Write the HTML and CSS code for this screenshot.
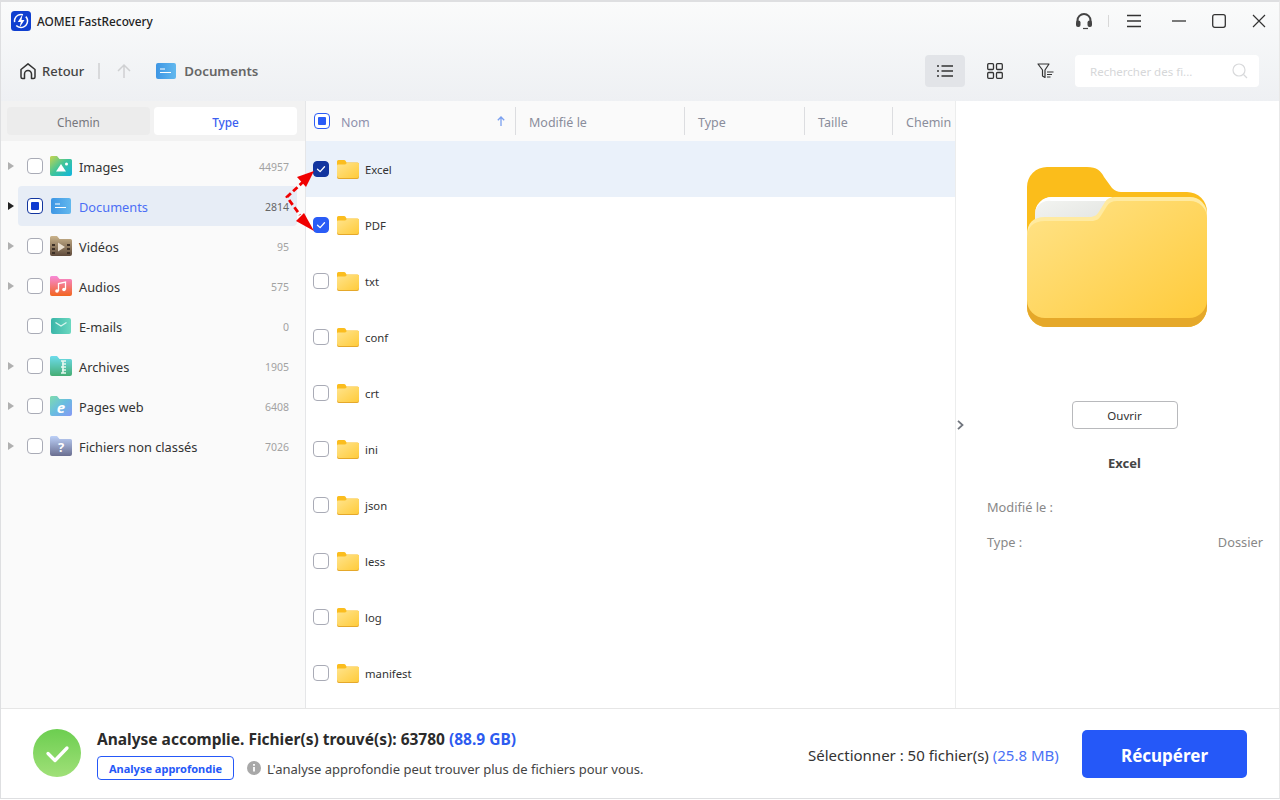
FILE: index.html
```html
<!DOCTYPE html>
<html lang="fr">
<head>
<meta charset="utf-8">
<title>AOMEI FastRecovery</title>
<link rel="stylesheet" href="styles.css">
</head>
<body>
<svg class="defs" width="0" height="0" aria-hidden="true">
  <defs>
    <linearGradient id="gf" x1="0" y1="0" x2="1" y2="1"><stop offset="0" stop-color="#ffe48d"/><stop offset="1" stop-color="#ffcb3a"/></linearGradient>
    <linearGradient id="gdoc" x1="0" y1="0" x2="1" y2="0"><stop offset="0" stop-color="#3e96e4"/><stop offset="1" stop-color="#62b8ee"/></linearGradient>
    <linearGradient id="gimg" x1="0" y1="0" x2="1" y2="1"><stop offset="0" stop-color="#c7d54f"/><stop offset=".5" stop-color="#3ec49a"/><stop offset="1" stop-color="#10b5e0"/></linearGradient>
    <linearGradient id="gvid" x1="0" y1="0" x2="0" y2="1"><stop offset="0" stop-color="#cbb48c"/><stop offset="1" stop-color="#5f4b3c"/></linearGradient>
    <linearGradient id="gaud" x1="0" y1="0" x2="0" y2="1"><stop offset="0" stop-color="#f78ad8"/><stop offset="1" stop-color="#f2651f"/></linearGradient>
    <linearGradient id="gmail" x1="0" y1="0" x2="1" y2="0"><stop offset="0" stop-color="#3ab5a8"/><stop offset="1" stop-color="#6bd8c0"/></linearGradient>
    <linearGradient id="garc" x1="0" y1="0" x2="0" y2="1"><stop offset="0" stop-color="#6ddcec"/><stop offset="1" stop-color="#45ad74"/></linearGradient>
    <linearGradient id="gweb" x1="0" y1="0" x2="1" y2="1"><stop offset="0" stop-color="#7fdcae"/><stop offset=".5" stop-color="#68bde0"/><stop offset="1" stop-color="#8698f5"/></linearGradient>
    <linearGradient id="gunk" x1="0" y1="0" x2="0" y2="1"><stop offset="0" stop-color="#bcd0f8"/><stop offset="1" stop-color="#6a6e90"/></linearGradient>
    <linearGradient id="gok" x1="0" y1="0" x2="0" y2="1"><stop offset="0" stop-color="#6cce50"/><stop offset="1" stop-color="#a0e078"/></linearGradient>
    <symbol id="folder" viewBox="0 0 22 20">
      <path d="M0 2.5A1.5 1.5 0 0 1 1.500 1H7q1 0 1.500.8L9.500 3.500H20.500A1.500 1.500 0 0 1 22 5v12a2 2 0 0 1-2 2H2a2 2 0 0 1-2-2z" fill="#fbbd1e"/>
      <path d="M0 6.500Q0 5.500 1 5.500H8q.8 0 1.200-.7L9.800 4H21q1 0 1 1v12a2 2 0 0 1-2 2H2a2 2 0 0 1-2-2z" fill="url(#gf)"/>
      <path d="M0 17a2 2 0 0 0 2 2h18a2 2 0 0 0 2-2v1.200a1.800 1.800 0 0 1-1.800 1.800H1.800A1.800 1.800 0 0 1 0 18.200z" fill="#e5a82a"/>
    </symbol>
    <symbol id="check" viewBox="0 0 16 16"><path d="M4 8.200 7 11l5-5.500" fill="none" stroke="#fff" stroke-width="1.500" stroke-linecap="round" stroke-linejoin="round"/></symbol>
  </defs>
</svg>

<div class="window">
  <header class="head">
    <div class="titlebar">
      <div class="brand">
        <svg class="logo" width="20" height="20" viewBox="0 0 20 20"><rect width="20" height="20" rx="3.500" fill="#0f3fd0"/><circle cx="10" cy="10" r="6.500" fill="none" stroke="#fff" stroke-width="1.500" stroke-dasharray="13 3.500" transform="rotate(20 10 10)"/><path d="M11.500 3.500 6.800 11h3l-1.300 5.500L13.500 9h-3z" fill="#fff"/></svg>
        <span class="brand-name">AOMEI FastRecovery</span>
      </div>
      <div class="winctl">
        <svg class="i-head" width="18" height="18" viewBox="0 0 18 18"><path d="M2.500 10.500V8.500a6.500 6.500 0 0 1 13 0v2" fill="none" stroke="#444" stroke-width="2"/><rect x="1" y="8.500" width="4.500" height="6.500" rx="2" fill="#444"/><rect x="12.500" y="8.500" width="4.500" height="6.500" rx="2" fill="#444"/><path d="M13 16.500H8" stroke="#444" stroke-width="1.200"/></svg>
        <span class="ctl-sep"></span>
        <svg class="i-menu" width="16" height="14" viewBox="0 0 16 14"><path d="M1 1.500h14M1 7h14M1 12.500h14" stroke="#333" stroke-width="1.300"/></svg>
        <svg class="i-min" width="14" height="14" viewBox="0 0 14 14"><path d="M0 7h14" stroke="#333" stroke-width="1.300"/></svg>
        <svg class="i-max" width="14" height="14" viewBox="0 0 14 14"><rect x=".7" y=".7" width="12.600" height="12.600" rx="2" fill="none" stroke="#333" stroke-width="1.300"/></svg>
        <svg class="i-close" width="14" height="14" viewBox="0 0 14 14"><path d="M1 1l12 12M13 1 1 13" stroke="#333" stroke-width="1.200"/></svg>
      </div>
    </div>
    <div class="toolbar">
      <div class="crumbs">
        <svg width="18" height="18" viewBox="0 0 18 18"><path d="M5.500 16.500H3.500A1.500 1.500 0 0 1 2 15V7.500L9 1.800l7 5.700V15a1.500 1.500 0 0 1-1.500 1.500h-2V12a3.500 3.500 0 0 0-7 0z" fill="none" stroke="#333" stroke-width="1.500" stroke-linejoin="round"/></svg>
        <span class="back">Retour</span>
        <span class="crumb-sep"></span>
        <svg class="up" width="16" height="16" viewBox="0 0 16 16"><path d="M8 15V2M2 8l6-6 6 6" fill="none" stroke="#cfd0d2" stroke-width="1.500"/></svg>
        <svg class="doc" width="20" height="16" viewBox="0 0 20 16"><rect width="20" height="16" rx="2" fill="url(#gdoc)"/><path d="M4 6h5M4 9.500h11" stroke="#fff" stroke-width="1.200"/></svg>
        <span class="crumb-name">Documents</span>
      </div>
      <div class="tools">
        <div class="tool tool-on"><svg width="16" height="12" viewBox="0 0 16 12"><path d="M4.500 1H16M4.500 6H16M4.500 11H16" stroke="#333" stroke-width="1.300"/><path d="M0 1h2M0 6h2M0 11h2" stroke="#333" stroke-width="1.500"/></svg></div>
        <div class="tool"><svg width="16" height="16" viewBox="0 0 16 16"><g fill="none" stroke="#333" stroke-width="1.300"><rect x=".7" y=".7" width="5.800" height="5.800" rx="1"/><rect x="9.500" y=".7" width="5.800" height="5.800" rx="1"/><rect x=".7" y="9.500" width="5.800" height="5.800" rx="1"/><rect x="9.500" y="9.500" width="5.800" height="5.800" rx="1"/></g></svg></div>
        <div class="tool"><svg width="17" height="16" viewBox="0 0 17 16"><path d="M1 1h11L8 7v7.500L5.500 13V7z" fill="none" stroke="#333" stroke-width="1.200" stroke-linejoin="round"/><path d="M10 9h6.500M10 11.500h5M10 14h3.500" stroke="#333" stroke-width="1.100"/></svg></div>
      </div>
      <div class="search">
        <span class="search-ph">Rechercher des fi...</span>
        <svg width="16" height="16" viewBox="0 0 16 16"><circle cx="7" cy="7" r="6" fill="none" stroke="#d8d9db" stroke-width="1.200"/><path d="M11.500 11.500 15 15" stroke="#d8d9db" stroke-width="1.200"/></svg>
      </div>
    </div>
  </header>

  <main class="body">
    <aside class="side">
      <div class="tabs">
        <div class="tab">Chemin</div>
        <div class="tab tab-on">Type</div>
      </div>
      <ul class="cats">
        <li class="cat">
          <span class="tri"></span><span class="box"></span>
          <svg class="cat-ic" width="22" height="20" viewBox="0 0 22 20"><path d="M0 1.500A1.500 1.500 0 0 1 1.500 0H7l2.500 3H20.500A1.500 1.500 0 0 1 22 4.500V18a2 2 0 0 1-2 2H2a2 2 0 0 1-2-2z" fill="url(#gimg)"/><path d="M6 15.500 11 8l5 7.500z" fill="#fff"/><circle cx="16.500" cy="8" r="1.500" fill="#fff"/></svg>
          <span class="cat-name">Images</span><span class="cat-n">44957</span>
        </li>
        <li class="cat cat-on">
          <span class="tri tri-on"></span><span class="box box-part"></span>
          <svg class="cat-ic" width="20" height="16" viewBox="0 0 20 16"><rect width="20" height="16" rx="2" fill="url(#gdoc)"/><path d="M4 6h5M4 9.500h11" stroke="#fff" stroke-width="1.200"/></svg>
          <span class="cat-name">Documents</span><span class="cat-n">2814</span>
        </li>
        <li class="cat">
          <span class="tri"></span><span class="box"></span>
          <svg class="cat-ic" width="22" height="20" viewBox="0 0 22 20"><path d="M0 1.500A1.500 1.500 0 0 1 1.500 0H7l2.500 3H20.500A1.500 1.500 0 0 1 22 4.500V18a2 2 0 0 1-2 2H2a2 2 0 0 1-2-2z" fill="url(#gvid)"/><path d="M8 6.500v9l7-4.500z" fill="#eadfd0"/><path d="M2 8h3v2H2zM2 12h3v2H2zM2 16h3v2H2zM17 8h3v2h-3zM17 12h3v2h-3zM17 16h3v2h-3z" fill="#3d3026"/></svg>
          <span class="cat-name">Vidéos</span><span class="cat-n">95</span>
        </li>
        <li class="cat">
          <span class="tri"></span><span class="box"></span>
          <svg class="cat-ic" width="22" height="20" viewBox="0 0 22 20"><path d="M0 1.500A1.500 1.500 0 0 1 1.500 0H7l2.500 3H20.500A1.500 1.500 0 0 1 22 4.500V18a2 2 0 0 1-2 2H2a2 2 0 0 1-2-2z" fill="url(#gaud)"/><path d="M8.500 15V7.500l7-1.500V13.500" fill="none" stroke="#fff" stroke-width="1.300"/><circle cx="7" cy="15" r="1.800" fill="#fff"/><circle cx="14" cy="13.500" r="1.800" fill="#fff"/></svg>
          <span class="cat-name">Audios</span><span class="cat-n">575</span>
        </li>
        <li class="cat">
          <span class="tri tri-none"></span><span class="box"></span>
          <svg class="cat-ic" width="20" height="16" viewBox="0 0 20 16"><rect width="20" height="16" rx="2" fill="url(#gmail)"/><path d="M4.500 4.500 10 8l5.500-3.500" fill="none" stroke="#d8f5ee" stroke-width="1.300"/></svg>
          <span class="cat-name">E-mails</span><span class="cat-n">0</span>
        </li>
        <li class="cat">
          <span class="tri"></span><span class="box"></span>
          <svg class="cat-ic" width="22" height="20" viewBox="0 0 22 20"><path d="M0 1.500A1.500 1.500 0 0 1 1.500 0H7l2.500 3H20.500A1.500 1.500 0 0 1 22 4.500V18a2 2 0 0 1-2 2H2a2 2 0 0 1-2-2z" fill="url(#garc)"/><path d="M11 5h5M12 8h4M11 11h5M12 14h4M11 17h5" stroke="#e6f7ef" stroke-width="1.400"/><path d="M13 5v12" stroke="#e6f7ef" stroke-width="1.600"/></svg>
          <span class="cat-name">Archives</span><span class="cat-n">1905</span>
        </li>
        <li class="cat">
          <span class="tri"></span><span class="box"></span>
          <svg class="cat-ic" width="22" height="20" viewBox="0 0 22 20"><path d="M0 1.500A1.500 1.500 0 0 1 1.500 0H7l2.500 3H20.500A1.500 1.500 0 0 1 22 4.500V18a2 2 0 0 1-2 2H2a2 2 0 0 1-2-2z" fill="url(#gweb)"/><text class="e" x="11" y="17" text-anchor="middle">e</text></svg>
          <span class="cat-name">Pages web</span><span class="cat-n">6408</span>
        </li>
        <li class="cat">
          <span class="tri"></span><span class="box"></span>
          <svg class="cat-ic" width="22" height="20" viewBox="0 0 22 20"><path d="M0 1.500A1.500 1.500 0 0 1 1.500 0H7l2.500 3H20.500A1.500 1.500 0 0 1 22 4.500V18a2 2 0 0 1-2 2H2a2 2 0 0 1-2-2z" fill="url(#gunk)"/><text class="q" x="11" y="16" text-anchor="middle">?</text></svg>
          <span class="cat-name">Fichiers non classés</span><span class="cat-n">7026</span>
        </li>
      </ul>
    </aside>

    <section class="list">
      <div class="thead">
        <div class="th th-nom"><span class="box box-part box-blue"></span><span class="th-label">Nom</span>
          <svg class="sort" width="8" height="10" viewBox="0 0 8 10"><path d="M4 10V1M.8 4.300 4 1l3.200 3.300" fill="none" stroke="#7aa0f0" stroke-width="1.300"/></svg></div>
        <div class="th th-mod">Modifié le</div>
        <div class="th th-type">Type</div>
        <div class="th th-size">Taille</div>
        <div class="th th-path">Chemin</div>
      </div>
      <div class="rows">
        <div class="row row-on"><span class="box box-check box-dark"><svg width="16" height="16"><use href="#check"/></svg></span><svg width="22" height="20"><use href="#folder"/></svg><span class="row-name">Excel</span></div>
        <div class="row"><span class="box box-check"><svg width="16" height="16"><use href="#check"/></svg></span><svg width="22" height="20"><use href="#folder"/></svg><span class="row-name">PDF</span></div>
        <div class="row"><span class="box"></span><svg width="22" height="20"><use href="#folder"/></svg><span class="row-name">txt</span></div>
        <div class="row"><span class="box"></span><svg width="22" height="20"><use href="#folder"/></svg><span class="row-name">conf</span></div>
        <div class="row"><span class="box"></span><svg width="22" height="20"><use href="#folder"/></svg><span class="row-name">crt</span></div>
        <div class="row"><span class="box"></span><svg width="22" height="20"><use href="#folder"/></svg><span class="row-name">ini</span></div>
        <div class="row"><span class="box"></span><svg width="22" height="20"><use href="#folder"/></svg><span class="row-name">json</span></div>
        <div class="row"><span class="box"></span><svg width="22" height="20"><use href="#folder"/></svg><span class="row-name">less</span></div>
        <div class="row"><span class="box"></span><svg width="22" height="20"><use href="#folder"/></svg><span class="row-name">log</span></div>
        <div class="row"><span class="box"></span><svg width="22" height="20"><use href="#folder"/></svg><span class="row-name">manifest</span></div>
      </div>
    </section>

    <aside class="detail">
      <svg class="big-folder" width="180" height="160" viewBox="0 0 180 160">
        <defs><linearGradient id="gbig" x1="0" y1="0" x2="1" y2="1"><stop offset="0" stop-color="#ffe389"/><stop offset="1" stop-color="#ffca38"/></linearGradient><linearGradient id="gpaper" x1="0" y1="0" x2="1" y2="1"><stop offset="0" stop-color="#f4f5f2"/><stop offset="1" stop-color="#e0e2df"/></linearGradient></defs>
        <path d="M0 20A20 20 0 0 1 20 0H60C70 0 74 4 77 10L85 21Q89 25 94 25H160A20 20 0 0 1 180 45V90H0z" fill="#fbbd1b"/>
        <path d="M8 60V47A17 17 0 0 1 25 30H85L72 52 30 62z" fill="url(#gpaper)"/>
        <path d="M8 47A17 17 0 0 1 25 30H85L83 34H25A14 14 0 0 0 8 47z" fill="#fff"/>
        <path d="M0 140V68Q0 50 18 50H62C68 50 70 48 73 43L78 35Q81 30 88 30H163A17 17 0 0 1 180 47V140a20 20 0 0 1-20 20H20a20 20 0 0 1-20-20z" fill="#ffeaa0"/>
        <path d="M0 140V72Q0 54 18 54H64C70 54 72 52 75 47L80 39Q83 34 90 34H163A17 17 0 0 1 180 51V140a20 20 0 0 1-20 20H20a20 20 0 0 1-20-20z" fill="url(#gbig)"/>
        <path d="M0 133a18 18 0 0 0 18 18H162a18 18 0 0 0 18-18V140a20 20 0 0 1-20 20H20a20 20 0 0 1-20-20z" fill="#e5a82a"/>
      </svg>
      <button class="open" type="button">Ouvrir</button>
      <div class="d-title">Excel</div>
      <div class="d-line"><span>Modifié le :</span></div>
      <div class="d-line d-line2"><span>Type :</span><span>Dossier</span></div>
      <svg class="collapse" width="7" height="10" viewBox="0 0 7 10"><path d="M1 0.800 5.500 5 1 9.200" fill="none" stroke="#70757d" stroke-width="1.800"/></svg>
    </aside>

    <svg class="arrows" width="50" height="90" viewBox="0 0 50 90">
      <path d="M20 24 3 40l13 18" fill="none" stroke="#f00000" stroke-width="2.800" stroke-dasharray="6 3"/>
      <path d="M30 14 13 20l9 10z" fill="#f00000"/>
      <path d="M30 74 12 64l8-8z" fill="#f00000"/>
    </svg>
  </main>

  <footer class="foot">
    <svg class="ok" width="48" height="48" viewBox="0 0 48 48"><circle cx="24" cy="24" r="24" fill="url(#gok)"/><path d="M15 24.500l7 7 12-12.500" fill="none" stroke="#fff" stroke-width="3.300" stroke-linecap="round" stroke-linejoin="round"/></svg>
    <div class="status">
      <div class="status-main">Analyse accomplie. Fichier(s) trouvé(s): 63780 <span class="blue">(88.9 GB)</span></div>
      <div class="status-sub">
        <button class="deep" type="button">Analyse approfondie</button>
        <svg class="info" width="14" height="14" viewBox="0 0 14 14"><circle cx="7" cy="7" r="7" fill="#a8a8a8"/><path d="M7 6v4.500M7 3v1.800" stroke="#fff" stroke-width="1.800"/></svg>
        <span class="hint">L'analyse approfondie peut trouver plus de fichiers pour vous.</span>
      </div>
    </div>
    <div class="selected">Sélectionner : 50 fichier(s) <span class="blue-l">(25.8 MB)</span></div>
    <button class="recover" type="button">Récupérer</button>
  </footer>
</div>
</body>
</html>
```

FILE: styles.css
```css
* { box-sizing: border-box; }
html, body { margin: 0; height: 100%; }
body { width: 1280px; height: 800px; overflow: hidden; background: #fff; font-family: "Noto Sans", "Open Sans", sans-serif; color: #333; }
.defs { position: absolute; }
button { font-family: inherit; }
ul { list-style: none; margin: 0; padding: 0; }

.window { width: 1280px; height: 799px; border: 1px solid #dedfe1; border-right-color: #e8e8e8; border-top-width: 2px; display: flex; flex-direction: column; overflow: hidden; }

.head { height: 99px; flex: none; background: linear-gradient(#fafbfb, #eef0f3); }
.titlebar { height: 37px; display: flex; align-items: center; justify-content: space-between; padding: 0 0 0 10px; }
.brand { display: flex; align-items: center; gap: 6px; }
.brand-name { font-size: 11.800px; font-weight: 500; color: #222; }
.winctl { display: flex; align-items: center; }
.i-head { margin-right: 15px; }
.ctl-sep { width: 1px; height: 12px; background: #d8d8d8; margin-right: 17px; }
.i-menu { margin-right: 30px; }
.i-min { margin-right: 26px; }
.i-max { margin-right: 26px; }
.i-close { margin-right: 13px; }

.toolbar { height: 62px; display: flex; align-items: center; padding-left: 18px; padding-top: 2px; }
.crumbs { display: flex; align-items: center; flex: 1; }
.back { font-size: 13px; font-weight: 500; margin-left: 5px; color: #444; }
.crumb-sep { width: 2px; height: 16px; background: #d8d9db; margin: 0 16px 0 14px; }
.up { margin-right: 24px; }
.crumb-name { font-size: 13.300px; font-weight: 600; color: #666; margin-left: 8px; }
.tools { display: flex; gap: 10px; margin-right: 10px; }
.tool { width: 40px; height: 32px; display: flex; align-items: center; justify-content: center; border-radius: 4px; }
.tool-on { background: #e2e4e8; }
.search { width: 184px; height: 32px; margin-right: 20px; background: #fff; border-radius: 4px; display: flex; align-items: center; justify-content: space-between; padding: 0 11px 0 15px; }
.search-ph { font-size: 11.500px; color: #d6d7d9; }

.body { flex: 1; min-height: 0; display: flex; position: relative; }

.side { width: 305px; flex: none; background: #fafafa; border-right: 1px solid #e5e6e8; }
.tabs { display: flex; gap: 4px; padding: 6px 8px 0 6px; background: #f2f2f2; height: 40px; }
.tab { flex: 1; height: 28px; padding-top: 2px; border-radius: 4px; background: #ececec; color: #77777d; font-size: 11.800px; display: flex; align-items: center; justify-content: center; }
.tab-on { background: #fff; color: #3c5ff0; font-weight: 500; }
.cats { padding: 5px 8px 0 7px; }
.cat { height: 40px; display: flex; align-items: center; padding-right: 2px; position: relative; }
.cat-on { background: #e7edf6; border-radius: 4px; margin-left: 10px; padding-left: 0; }
.cat-on .tri { position: absolute; left: -10px; margin: 0; }
.cat-on .box { margin-left: 9px; }
.tri { width: 0; height: 0; border-left: 6px solid #b0b0b0; border-top: 4px solid transparent; border-bottom: 4px solid transparent; margin-right: 13px; flex: none; }
.tri-on { border-left-color: #222; }
.tri-none { border-left-color: transparent; }
.box { width: 16px; height: 16px; flex: none; border: 1.500px solid #a9abb6; border-radius: 4px; background: #fff; display: flex; align-items: center; justify-content: center; }
.box-part { border-color: #12359f; position: relative; }
.box-part::after { content: ""; width: 8px; height: 8px; background: #0f3bd0; border-radius: 1px; }
.box-blue { border-color: #2a5cf6; }
.box-blue::after { background: #2a5cf6; }
.box-check { background: #2a5cf6; border-color: #2a5cf6; }
.box-dark { background: #12359f; border-color: #12359f; }
.cat-ic { flex: none; width: 22px; margin: 0 7px 0 7px; }
.cat-name { font-size: 12.800px; color: #333; flex: 1; padding-top: 2px; }
.cat-on .cat-name { color: #4c6ff5; }
.cat-n { font-size: 10.500px; color: #a2a2a2; margin-right: 6px; padding-top: 1px; }
.cat-on .cat-n { color: #666; }
.q { font: 700 13px "Noto Sans", sans-serif; fill: #fff; }
.e { font: italic 700 15px "Noto Sans", sans-serif; fill: #fff; }

.list { width: 650px; flex: none; border-right: 1px solid #eceded; background: #fff; }
.thead { height: 40px; display: flex; align-items: center; background: #fafafa; }
.th { height: 28px; display: flex; align-items: center; font-size: 12.500px; color: #8a8d9b; padding: 2px 0 0 13px; border-left: 1px solid #dcdde0; flex: none; }
.th-nom { width: 209px; border-left: 0; padding: 0 0 0 8px; position: relative; }
.th-label { margin-left: 11px; padding-top: 2px; color: #8e91ad; }
.sort { position: absolute; left: 191px; top: 9px; }
.th-mod { width: 169px; }
.th-type { width: 120px; }
.th-size { width: 88px; }
.th-path { width: 63px; white-space: nowrap; overflow: hidden; }
.rows { height: 567px; overflow: hidden; }
.row { height: 56px; display: flex; align-items: center; padding-left: 7px; gap: 8px; }
.row-on { background: #eaf1fa; }
.row-name { font-size: 11.300px; color: #333; margin-left: -2px; }

.detail { flex: 1; position: relative; display: flex; flex-direction: column; align-items: center; background: #fff; }
.big-folder { margin-top: 66px; margin-left: -1px; flex: none; }
.open { width: 106px; height: 28px; margin-top: 74px; margin-left: 14px; border: 1px solid #b8b9bc; border-radius: 4px; background: #fff; color: #333; font-size: 11.500px; padding: 0; }
.d-title { font-size: 13px; font-weight: 700; color: #444; margin-top: 25px; margin-left: 14px; }
.d-line { align-self: stretch; display: flex; justify-content: space-between; font-size: 12.800px; color: #888; padding: 0 16px 0 31px; margin-top: 26px; }
.d-line2 { margin-top: 17px; }
.collapse { position: absolute; left: 1px; top: 319px; }

.arrows { position: absolute; left: 283px; top: 56px; }

.foot { height: 90px; flex: none; border-top: 1px solid #e6e6e6; display: flex; align-items: center; padding-left: 32px; background: #fff; }
.ok { flex: none; margin-right: 16px; margin-top: -1px; }
.status { width: 711px; padding-top: 2px; }
.status-main { font-size: 15.500px; font-weight: 700; color: #2b2b2b; line-height: 20px; white-space: nowrap; }
.blue { color: #2d5bf0; }
.status-sub { display: flex; align-items: center; margin-top: 7px; }
.deep { width: 137px; height: 24px; padding: 0; background: #fff; border: 1px solid #2558f8; border-radius: 4px; color: #2558f8; font-size: 11px; font-weight: 700; margin-right: 13px; }
.info { margin-right: 6px; }
.hint { font-size: 13px; color: #444; padding-top: 1px; white-space: nowrap; }
.selected { font-size: 15px; color: #333; width: 274px; white-space: nowrap; padding-top: 2px; }
.blue-l { color: #4a72f5; }
.recover { width: 165px; height: 48px; background: #2558f8; border: 0; border-radius: 5px; color: #fff; font-size: 17px; font-weight: 700; padding: 4px 0 0; }
```
